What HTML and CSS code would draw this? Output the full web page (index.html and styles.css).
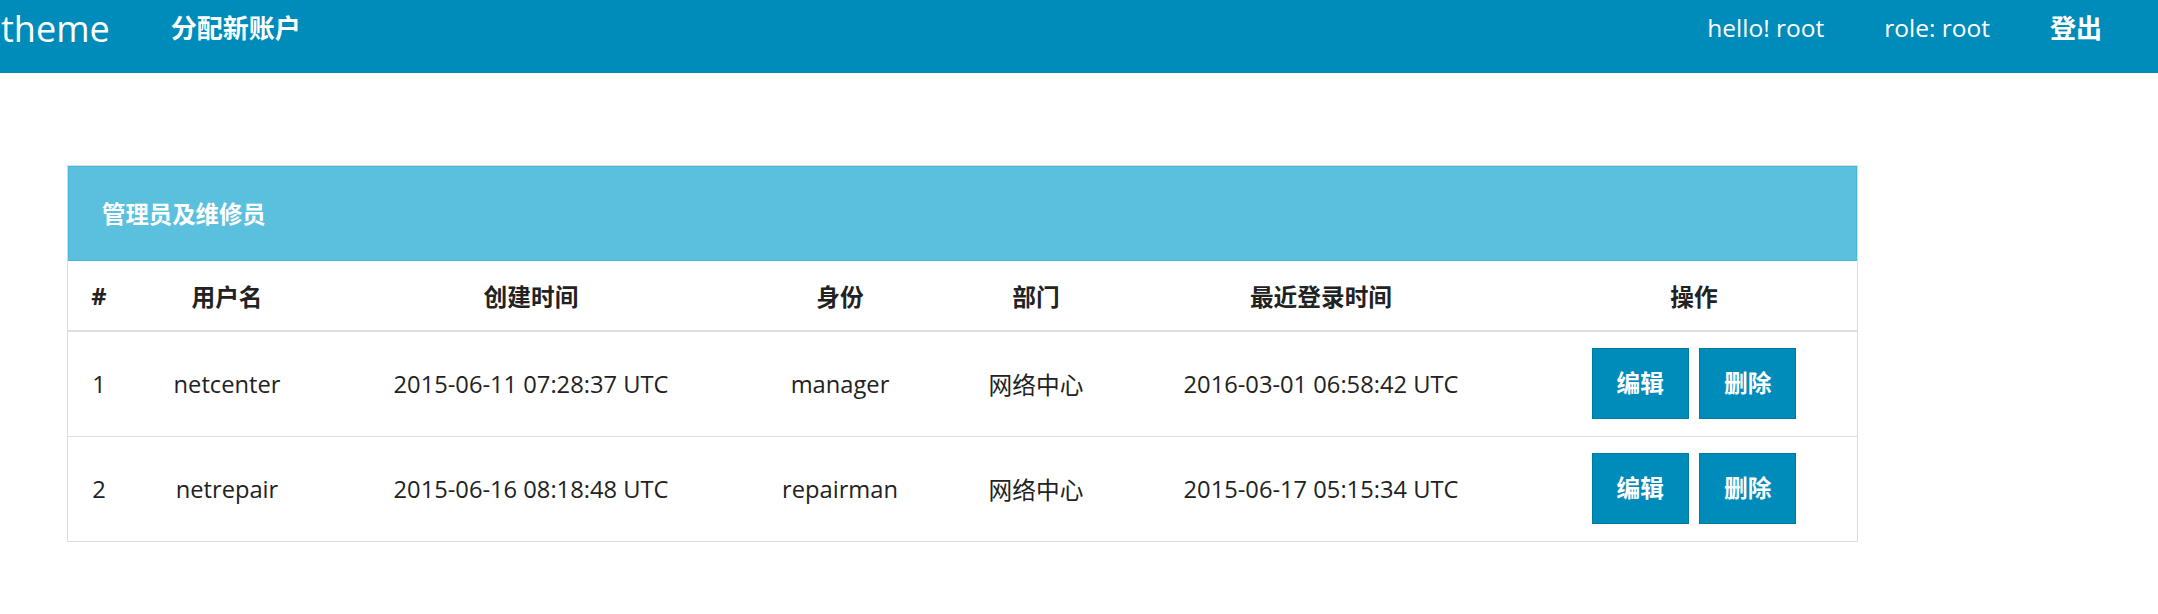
FILE: index.html
```html
<!DOCTYPE html>
<html lang="zh-CN">
<head>
<meta charset="utf-8">
<title>theme</title>
<link rel="stylesheet" href="styles.css">
</head>
<body>
<nav class="navbar">
  <a class="brand" href="#">theme</a>
  <ul class="nav">
    <li><a class="nav-link strong" href="#">分配新账户</a></li>
  </ul>
  <ul class="nav nav-right">
    <li><span class="nav-link">hello! root</span></li>
    <li><span class="nav-link">role: root</span></li>
    <li><a class="nav-link strong" href="#">登出</a></li>
  </ul>
</nav>
<main class="main">
  <section class="panel">
    <div class="panel-heading">
      <h3 class="panel-title">管理员及维修员</h3>
    </div>
    <table class="table">
      <colgroup>
        <col class="c1"><col class="c2"><col class="c3"><col class="c4"><col class="c5"><col class="c6"><col class="c7">
      </colgroup>
      <thead>
        <tr>
          <th>#</th><th>用户名</th><th>创建时间</th><th>身份</th><th>部门</th><th>最近登录时间</th><th class="ops">操作</th>
        </tr>
      </thead>
      <tbody>
        <tr>
          <td>1</td><td>netcenter</td><td>2015-06-11 07:28:37 UTC</td><td>manager</td><td>网络中心</td><td>2016-03-01 06:58:42 UTC</td>
          <td class="ops"><div class="btns"><a class="btn" href="#">编辑</a><a class="btn" href="#">删除</a></div></td>
        </tr>
        <tr>
          <td>2</td><td>netrepair</td><td>2015-06-16 08:18:48 UTC</td><td>repairman</td><td>网络中心</td><td>2015-06-17 05:15:34 UTC</td>
          <td class="ops"><div class="btns"><a class="btn" href="#">编辑</a><a class="btn" href="#">删除</a></div></td>
        </tr>
      </tbody>
    </table>
  </section>
</main>
</body>
</html>
```
FILE: styles.css
```css
* { box-sizing: border-box; }
html, body { margin: 0; padding: 0; background: #fff; }
body {
  font-family: "Open Sans", "Noto Sans CJK SC", sans-serif;
  font-size: 23.7px;
  color: #222;
}
a { text-decoration: none; color: inherit; }

.navbar {
  display: flex;
  align-items: flex-start;
  height: 73px;
  background: #008cba;
  color: #fff;
  padding-right: 26px;
}
.brand {
  font-weight: 400;
  font-size: 36px;
  line-height: 50px;
  padding: 4px 31px 0 1px;
  color: #fff;
}
.nav {
  display: flex;
  list-style: none;
  margin: 0;
  padding: 0;
}
.nav-right { margin-left: auto; }
.nav-link {
  display: block;
  font-size: 24.5px;
  line-height: 34px;
  padding: 11px 30px 0;
  color: #fff;
}
.nav-link.strong { font-weight: 700; font-size: 26px; }

.main { padding: 92px 0 0 67px; }

.panel {
  width: 1791px;
  border: 1px solid #ddd;
  background: #fff;
}
.panel-heading {
  background: #5bc0de;
  border: 1px solid #46b8da;
  height: 95px;
  display: flex;
  align-items: center;
  padding: 0 33px;
}
.panel-title {
  margin: 0;
  color: #fff;
  font-size: 23.4px;
  font-weight: 700;
  line-height: 34px;
}

.table {
  width: 100%;
  border-collapse: collapse;
  table-layout: fixed;
}
.c1 { width: 62px; }
.c2 { width: 194px; }
.c3 { width: 414px; }
.c4 { width: 204px; }
.c5 { width: 188px; }
.c6 { width: 382px; }
.c7 { width: 345px; }
.table th {
  font-weight: 700;
  height: 70px;
  text-align: center;
  vertical-align: middle;
  border-bottom: 2px solid #ddd;
  padding: 0;
}
.table td {
  height: 105px;
  text-align: center;
  vertical-align: middle;
  padding: 0;
  white-space: nowrap;
}
.table tbody tr + tr td { border-top: 1px solid #ddd; }
.table .ops { padding-left: 19px; }

.btns {
  display: inline-flex;
  gap: 10px;
}
.btn {
  display: block;
  background: #008cba;
  border: 1px solid #0079a1;
  color: #fff;
  font-weight: 700;
  font-size: 23.7px;
  line-height: 35px;
  padding: 17px 24px;
}
```
